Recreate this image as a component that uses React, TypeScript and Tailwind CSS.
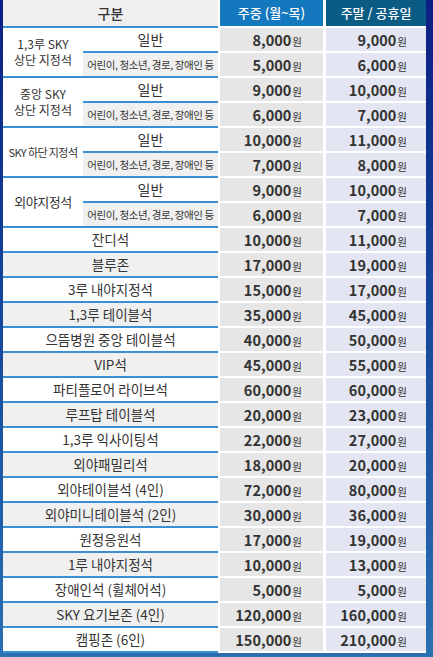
import React from 'react';

type Price = { week: string; end: string };
type Group = { label: React.ReactNode; labelClass: string; rows: [Price, Price] };
type Single = { name: string } & Price;

const FONT = "font-['Noto_Sans_CJK_KR','Noto_Sans',sans-serif]";

const groups: Group[] = [
    { label: <>1,3루 SKY<br />상단 지정석</>, labelClass: "text-[12px] leading-[16px]", rows: [{ week: "8,000", end: "9,000" }, { week: "5,000", end: "6,000" }] },
    { label: <>중앙 SKY<br />상단 지정석</>, labelClass: "text-[12px] leading-[16px]", rows: [{ week: "9,000", end: "10,000" }, { week: "6,000", end: "7,000" }] },
    { label: <>SKY 하단 지정석</>, labelClass: "text-[11px] tracking-[-0.6px]", rows: [{ week: "10,000", end: "11,000" }, { week: "7,000", end: "8,000" }] },
    { label: <>외야지정석</>, labelClass: "text-[13px] tracking-[-0.5px]", rows: [{ week: "9,000", end: "10,000" }, { week: "6,000", end: "7,000" }] },
];

const singles: Single[] = [
    { name: "잔디석", week: "10,000", end: "11,000" },
    { name: "블루존", week: "17,000", end: "19,000" },
    { name: "3루 내야지정석", week: "15,000", end: "17,000" },
    { name: "1,3루 테이블석", week: "35,000", end: "45,000" },
    { name: "으뜸병원 중앙 테이블석", week: "40,000", end: "50,000" },
    { name: "VIP석", week: "45,000", end: "55,000" },
    { name: "파티플로어 라이브석", week: "60,000", end: "60,000" },
    { name: "루프탑 테이블석", week: "20,000", end: "23,000" },
    { name: "1,3루 익사이팅석", week: "22,000", end: "27,000" },
    { name: "외야패밀리석", week: "18,000", end: "20,000" },
    { name: "외야테이블석 (4인)", week: "72,000", end: "80,000" },
    { name: "외야미니테이블석 (2인)", week: "30,000", end: "36,000" },
    { name: "원정응원석", week: "17,000", end: "19,000" },
    { name: "1루 내야지정석", week: "10,000", end: "13,000" },
    { name: "장애인석 (휠체어석)", week: "5,000", end: "5,000" },
    { name: "SKY 요기보존 (4인)", week: "120,000", end: "160,000" },
    { name: "캠핑존 (6인)", week: "150,000", end: "210,000" },
];

const Won = ({ value }: { value: string }) => (
    <span className="text-[14.5px] font-bold text-[#333]">
        {value}<span className="text-[10.5px] font-normal ml-[1px]">원</span>
    </span>
);

const PriceCells = ({ p }: { p: Price }) => (
    <>
        <div className="w-[103px] h-full bg-[#e6e6e6] border-b-2 border-white flex items-center justify-end pr-[21px]">
            <Won value={p.week} />
        </div>
        <div className="w-[100px] h-full bg-[#e3e6f2] border-b-2 border-white flex items-center justify-end pr-[19px]">
            <Won value={p.end} />
        </div>
    </>
);

export default function App() {
    return (
        <div className={`w-[433px] h-[657px] overflow-hidden bg-gradient-to-b from-[#0d1e84] to-[#2a6fb2] pl-[3px] ${FONT}`}>
            <div className="w-[423px] bg-white flex flex-col">
                {/* header */}
                <div className="flex h-[28px] gap-x-[2px]">
                    <div className="w-[215px] bg-[#efefef] border-b-2 border-[#3b8fd4] flex items-center justify-center text-[14px] font-medium text-[#333]">구분</div>
                    <div className="w-[103px] bg-[#1478be] border-b-2 border-white flex items-center justify-center text-[13px] font-medium text-white">주중 (월~목)</div>
                    <div className="w-[100px] ml-[1px] bg-[#0b5c84] border-b-2 border-white flex items-center justify-center text-[13px] font-medium text-white">주말 / 공휴일</div>
                </div>

                {/* grouped rows */}
                {groups.map((g, gi) => (
                    <div key={gi} className="flex">
                        <div className={`w-[80px] h-[50px] bg-white border-b-2 border-[#3b8fd4] flex items-center justify-center text-center text-[#333] ${g.labelClass}`}>
                            {g.label}
                        </div>
                        <div className="flex flex-col">
                            {g.rows.map((p, ri) => (
                                <div key={ri} className="flex h-[25px] gap-x-[2px]">
                                    <div className={`w-[135px] h-full border-b-2 border-[#3b8fd4] flex items-center justify-center text-[#333] ${ri === 0 ? "bg-white text-[14px]" : "bg-[#f0f0f0] text-[10.5px] tracking-[-0.4px]"}`}>
                                        {ri === 0 ? "일반" : "어린이, 청소년, 경로, 장애인 등"}
                                    </div>
                                    <div className="flex h-full gap-x-[3px]">
                                        <PriceCells p={p} />
                                    </div>
                                </div>
                            ))}
                        </div>
                    </div>
                ))}

                {/* single rows */}
                {singles.map((s, i) => (
                    <div key={s.name} className="flex h-[25px] gap-x-[2px]">
                        <div className={`w-[215px] h-full border-b-2 border-[#3b8fd4] flex items-center justify-center text-[13.5px] text-[#333] ${i % 2 === 0 ? "bg-white" : "bg-[#f0f0f0]"}`}>
                            {s.name}
                        </div>
                        <div className="flex h-full gap-x-[3px]">
                            <PriceCells p={s} />
                        </div>
                    </div>
                ))}
            </div>
        </div>
    );
}
